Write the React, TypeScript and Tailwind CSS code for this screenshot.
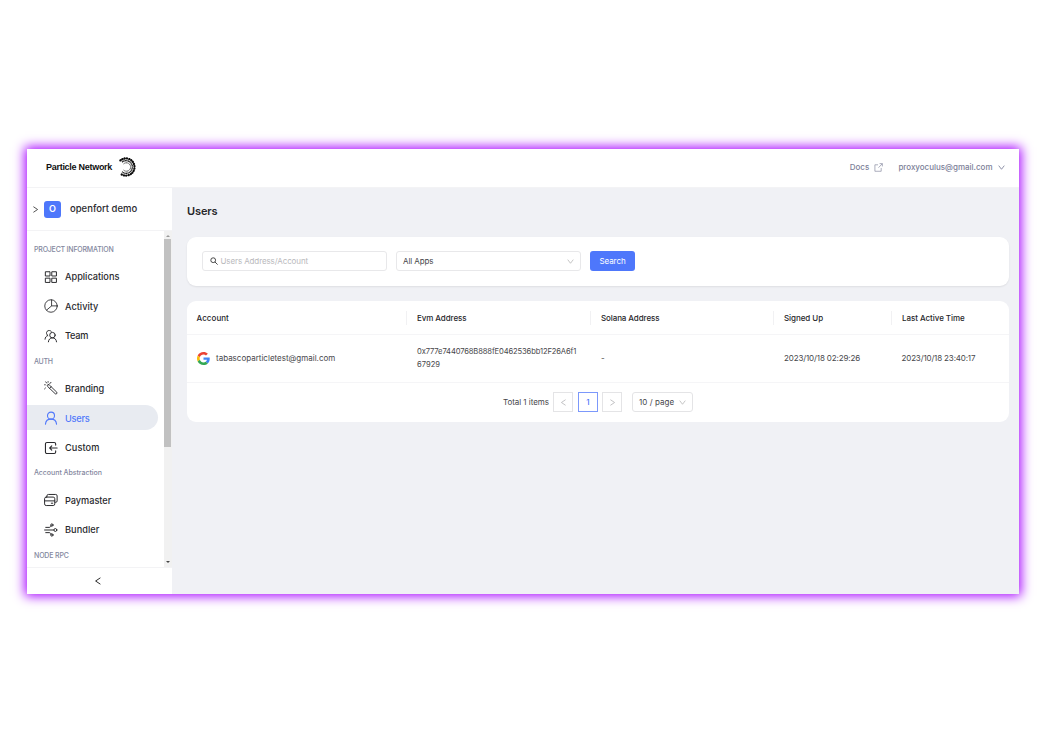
import React from 'react';

type IconProps = { className?: string };

const base = {
  viewBox: '0 0 24 24',
  fill: 'none',
  stroke: 'currentColor',
  strokeWidth: 1.7,
  strokeLinecap: 'round' as const,
  strokeLinejoin: 'round' as const,
};

const GridIcon = ({ className }: IconProps) => (
  <svg {...base} strokeLinejoin="miter" className={className}>
    <path d="M3 3h7.300v7.300H3zM14 3h7.300v7.300H14zM3 14h7.300v7.300H3zM14 14h7.300v7.300H14z" />
  </svg>
);
const PieIcon = ({ className }: IconProps) => (
  <svg {...base} strokeWidth={1.5} className={className}>
    <circle cx="12" cy="12" r="10.7" />
    <path d="M13 1.500v10.300h9.500M13 11.800L4.500 19" />
  </svg>
);
const TeamIcon = ({ className }: IconProps) => (
  <svg {...base} className={className}>
    <circle cx="14.500" cy="10.500" r="4.700" />
    <path d="M7.500 22c.4-4 2.900-6.800 7-6.800s6.600 2.800 7 6.800M1.800 17.500c.3-3.200 1.700-5.300 4.400-6.200M6.500 11.200a4.700 4.700 0 1 1 6.200-6.800" />
  </svg>
);
const WandIcon = ({ className }: IconProps) => (
  <svg {...base} strokeWidth={1.6} className={className}>
    <path d="M7.200 6.300a1.800 1.800 0 0 0-1 3.100L19 21.600a1.800 1.800 0 0 0 2.900-2.400L9.200 6.900a2 2 0 0 0-2-.6zM12.200 9.800L9.700 12.500M10 4.500l2-2.300M4.500 3.500L3 1.500M2.500 12L1 13.500M1 6.500h1.200M7 1v1.200" />
  </svg>
);
const UserIcon = ({ className }: IconProps) => (
  <svg {...base} strokeWidth={1.9} className={className}>
    <circle cx="12" cy="8" r="6" />
    <path d="M2.500 22.500C3 17.500 6.500 14 12 14s9 3.500 9.500 8.500" />
  </svg>
);
const CustomIcon = ({ className }: IconProps) => (
  <svg {...base} strokeWidth={1.9} className={className}>
    <path d="M20 7V5a2.500 2.500 0 0 0-2.500-2.500H5A2.500 2.500 0 0 0 2.500 5v14A2.500 2.500 0 0 0 5 21.500h12.500A2.500 2.500 0 0 0 20 19v-2M22.500 12H10M13.300 8.500L9.800 12l3.500 3.500" />
  </svg>
);
const CardsIcon = ({ className }: IconProps) => (
  <svg {...base} className={className}>
    <rect x="1" y="7" width="17.500" height="14.500" rx="2.800" />
    <path d="M1 13.500h17.500M12.500 17.500h2.500M5 6.500V5a2.500 2.500 0 0 1 2.500-2.500H20A2.500 2.500 0 0 1 22.500 5v8.500a2.500 2.500 0 0 1-2.500 2.500h-1" />
  </svg>
);
const BundlerIcon = ({ className }: IconProps) => (
  <svg {...base} className={className}>
    <path d="M1 12h15.500M3 7.500h6c2.500 0 2.500-2 3-3M3 16.500h6c2.500 0 2.500 2 3 3" />
    <circle cx="13.500" cy="3.500" r="2" />
    <circle cx="19.500" cy="12" r="2.500" />
    <circle cx="13.500" cy="20.500" r="2" />
  </svg>
);

const Chevron = ({ d, className }: { d: string; className?: string }) => (
  <svg viewBox="0 0 10 10" fill="none" stroke="currentColor" strokeWidth={1.2} className={className}>
    <path d={d} />
  </svg>
);
const LEFT = 'M8 1L2 5l6 4';
const RIGHT = 'M2 1l6 4-6 4';
const DOWN = 'M1 2.300l4 5.200 4-5.200';

const ParticleLogo = () => (
  <svg viewBox="0 0 20 20" fill="none" stroke="#0b0b0b" className="ml-[5.500px] h-5 w-5">
    <path d="M2.400 3.400A8.600 8.600 0 1 1 2.400 16.600" strokeWidth="2.300" strokeDasharray="0.100 2.200" strokeLinecap="round" />
    <path d="M4 5.200A6.300 6.300 0 1 1 4 14.800" strokeWidth="1.200" strokeDasharray="1.200 .3" />
    <path d="M5.600 6.900A4.200 4.200 0 1 1 5.600 13.100" strokeWidth=".8" strokeDasharray="1 .3" />
  </svg>
);

const GoogleLogo = () => (
  <svg viewBox="0 0 48 48" className="h-[13px] w-[13px] shrink-0">
    <path fill="#EA4335" d="M24 9.500c3.540 0 6.710 1.220 9.210 3.600l6.850-6.850C35.900 2.380 30.470 0 24 0 14.620 0 6.510 5.380 2.560 13.220l7.980 6.190C12.430 13.720 17.740 9.500 24 9.500z" />
    <path fill="#4285F4" d="M46.980 24.550c0-1.570-.15-3.090-.38-4.550H24v9.020h12.940c-.58 2.960-2.260 5.480-4.780 7.180l7.730 6c4.510-4.180 7.090-10.360 7.090-17.650z" />
    <path fill="#FBBC05" d="M10.530 28.590c-.48-1.450-.76-2.990-.76-4.590s.27-3.140.76-4.590l-7.980-6.190C.92 16.460 0 20.120 0 24c0 3.880.92 7.540 2.560 10.780l7.970-6.190z" />
    <path fill="#34A853" d="M24 48c6.480 0 11.930-2.130 15.890-5.810l-7.730-6c-2.150 1.450-4.920 2.300-8.160 2.300-6.260 0-11.570-4.220-13.470-9.910l-7.980 6.190C6.510 42.620 14.620 48 24 48z" />
  </svg>
);

type Entry = { label: string; tracking: string; icon: React.FC<IconProps>; active?: boolean };
const groups: { title: string; tracking: string; items: Entry[] }[] = [
  {
    title: 'PROJECT INFORMATION',
    tracking: 'tracking-[-0.2px]',
    items: [
      { label: 'Applications', tracking: 'tracking-[-0.02px]', icon: GridIcon },
      { label: 'Activity', tracking: 'tracking-[0px]', icon: PieIcon },
      { label: 'Team', tracking: 'tracking-[-0.25px]', icon: TeamIcon },
    ],
  },
  {
    title: 'AUTH',
    tracking: 'tracking-[-0.3px]',
    items: [
      { label: 'Branding', tracking: 'tracking-[-0.03px]', icon: WandIcon },
      { label: 'Users', tracking: 'tracking-[-0.25px]', icon: UserIcon, active: true },
      { label: 'Custom', tracking: 'tracking-[0.08px]', icon: CustomIcon },
    ],
  },
  {
    title: 'Account Abstraction',
    tracking: 'tracking-[-0.04px]',
    items: [
      { label: 'Paymaster', tracking: 'tracking-[-0.04px]', icon: CardsIcon },
      { label: 'Bundler', tracking: 'tracking-[0.05px]', icon: BundlerIcon },
    ],
  },
  { title: 'NODE RPC', tracking: 'tracking-[-0.15px]', items: [] },
];

const Sidebar = () => (
  <aside className="flex w-[145px] shrink-0 flex-col bg-white">
    <div className="flex h-[43px] shrink-0 items-center border-b border-[#f3f3f5] pl-[5px]">
      <Chevron d={RIGHT} className="h-[7px] w-[7px] text-[#333]" />
      <span className="ml-[5px] flex h-[17px] w-[17px] items-center justify-center rounded-[3px] bg-[#4e77fb] text-[9px] font-semibold text-white">O</span>
      <span className="ml-[9px] pt-px text-[9.500px] font-medium tracking-[0px] text-[#2c2c30]">openfort demo</span>
    </div>
    <div className="flex min-h-0 flex-1">
      <nav className="flex-1 overflow-hidden pt-[7.800px]">
        {groups.map((g) => (
          <section key={g.title}>
            <h2 className={`h-[23px] pl-[7px] text-[7px] font-medium leading-[22.500px] text-[#83879e] ${g.tracking}`}>{g.title}</h2>
            {g.items.map(({ label, icon: Icon, active, tracking }) => (
              <div key={label} className="flex h-[29.600px] items-center">
                <a className={`flex h-[25px] w-[131px] items-center rounded-r-full pl-[17px] text-[9.200px] font-medium ${active ? 'bg-[#e8ebf1] text-[#5078fb]' : 'text-[#2a2a2e]'}`}>
                  <Icon className="h-[14px] w-[14px]" />
                  <span className={`ml-[7px] pt-px ${tracking}`}>{label}</span>
                </a>
              </div>
            ))}
          </section>
        ))}
      </nav>
      <div className="mr-[0.500px] flex w-2 flex-col items-center justify-between bg-[#f1f1f1]">
        <div className="flex w-full flex-col items-center">
          <svg viewBox="0 0 4 2" className="mt-[4px] mb-[2px] h-[2px] w-1"><path d="M0 2l2-2 2 2z" fill="#999" /></svg>
          <div className="h-[208px] w-[7px] bg-[#c1c1c1]" />
        </div>
        <svg viewBox="0 0 4 2" className="mb-1 h-[2px] w-1"><path d="M0 0l2 2 2-2z" fill="#444" /></svg>
      </div>
    </div>
    <div className="flex h-[27px] shrink-0 items-center justify-center border-t border-[#f3f3f5] pr-1">
      <Chevron d={LEFT} className="h-[8px] w-[8px] text-[#222]" />
    </div>
  </aside>
);

const head = 'flex items-center text-[8px] font-medium text-[#26262a]';
const Sep = () => <i className="mr-[10px] h-[14px] w-px bg-[#f1f1f3]" />;
const cols = 'grid grid-cols-[219px_184px_183px_118px_118px]';

const UsersTable = () => (
  <section className="mt-[15px] h-[120.500px] rounded-[9px] bg-white text-[8px] text-[#47474b]">
    <div className={`${cols} h-[34px] border-b border-[#f5f5f7] pt-px`}>
      <div className={`${head} pl-[9.500px] tracking-[0.05px]`}>Account</div>
      <div className={head}><Sep /><span className="tracking-[-0.08px]">Evm Address</span></div>
      <div className={head}><Sep /><span className="tracking-[-0.1px]">Solana Address</span></div>
      <div className={head}><Sep /><span className="tracking-[-0.06px]">Signed Up</span></div>
      <div className={head}><Sep /><span className="tracking-[-0.05px]">Last Active Time</span></div>
    </div>
    <div className={`${cols} h-[47.500px] border-b border-[#f5f5f7]`}>
      <div className="flex items-center pl-[10px]">
        <GoogleLogo />
        <span className="ml-[6px] tracking-[0px]">tabascoparticletest@gmail.com</span>
      </div>
      <div className="flex flex-col justify-center pl-[11px] text-[7.600px] leading-[13px]">
        <span className="tracking-[-0.13px]">0x777e7440768B888fE0462536bb12F26A6f1</span>
        <span className="tracking-[0px]">67929</span>
      </div>
      <div className="flex items-center pb-px pl-[11px]">-</div>
      <div className="flex items-center pb-px pl-[11px] tracking-[-0.13px]">2023/10/18 02:29:26</div>
      <div className="flex items-center pb-px pl-[10.500px] tracking-[-0.15px]">2023/10/18 23:40:17</div>
    </div>
    <div className="flex h-[39px] items-center pl-[316px] text-[8px]">
      <span className="w-[50px] pb-px tracking-[-0.05px] whitespace-nowrap">Total 1 items</span>
      <span className="flex h-5 w-5 items-center justify-center border border-[#e4e4e6] text-[#b8b8ba]"><Chevron d={LEFT} className="h-[7px] w-[7px]" /></span>
      <span className="ml-[5px] flex h-5 w-5 items-center justify-center border border-[#7c98fb] font-medium text-[#4e77fb]">1</span>
      <span className="ml-[4px] flex h-5 w-5 items-center justify-center border border-[#e4e4e6] text-[#b8b8ba]"><Chevron d={RIGHT} className="h-[7px] w-[7px]" /></span>
      <span className="ml-[10px] flex h-5 w-[61px] items-center justify-between rounded-[3px] border border-[#e4e4e6] pr-[6px] pl-[6px] tracking-[0.05px]">
        <span className="pb-px">10 / page</span>
        <Chevron d={DOWN} className="h-[7px] w-[7px] text-[#bbb]" />
      </span>
    </div>
  </section>
);

export default function App() {
  return (
    <div className="h-[743px] w-[1047px] overflow-hidden bg-white pt-[149px] pl-[27px] font-['Inter',sans-serif]">
      <div className="flex h-[445px] w-[992px] flex-col bg-[#f0f1f5] shadow-[0_0_11px_2px_#a600ff]">
        <header className="flex h-[39px] shrink-0 items-center border-b border-[#f3f3f5] bg-white pb-[2px] pl-[19px]">
          <span className="pt-px font-['Liberation_Sans',sans-serif] text-[9px] font-bold tracking-[-0.28px] text-[#111]">Particle Network</span>
          <ParticleLogo />
          <div className="ml-auto flex items-center pr-[14.500px] text-[8px] font-medium text-[#7c8098]">
            <span className="tracking-[0.05px]">Docs</span>
            <svg viewBox="0 0 10 10" fill="none" stroke="currentColor" strokeWidth=".7" className="mr-[15px] ml-[5px] h-[9px] w-[9px]">
              <path d="M4.500 2H1v7.200h7V5.500M5 5.200L9.200.8M6.200.7h3.100v3.100" />
            </svg>
            <span className="tracking-[-0.01px]">proxyoculus@gmail.com</span>
            <Chevron d={DOWN} className="ml-[5px] h-[7px] w-[7px]" />
          </div>
        </header>
        <div className="flex min-h-0 flex-1">
          <Sidebar />
          <main className="flex-1 pr-[10px] pl-[15px]">
            <h1 className="h-[48.500px] pt-[15px] text-[11px] font-semibold leading-[17px] tracking-[-0.1px] text-[#26262a]">Users</h1>
            <section className="flex h-[49.500px] items-center rounded-[9px] bg-white pl-[15px] text-[8px] shadow-[0_1px_2px_rgba(0,0,0,0.08)]">
              <div className="flex h-5 w-[184.500px] items-center rounded-[3px] border border-[#e8e8ea] pl-[6.500px] tracking-[-0.11px] text-[#b9b9bc]">
                <svg viewBox="0 0 10 10" fill="none" stroke="#333" strokeWidth="1.100" className="mr-[3px] h-[8px] w-[8px]">
                  <circle cx="4" cy="4" r="3" /><path d="M6.200 6.200L9.500 9.500" />
                </svg>
                Users Address/Account
              </div>
              <div className="ml-[9.500px] flex h-5 w-[184.500px] items-center justify-between rounded-[3px] border border-[#e8e8ea] pr-[6px] pl-[6px] tracking-[-0.09px] text-[#47474b]">
                All Apps
                <Chevron d={DOWN} className="h-[7px] w-[7px] text-[#bbb]" />
              </div>
              <button className="ml-[9.500px] h-5 w-[45px] rounded-[3px] bg-[#4e77fb] tracking-[-0.05px] text-white">Search</button>
            </section>
            <UsersTable />
          </main>
        </div>
      </div>
    </div>
  );
}
